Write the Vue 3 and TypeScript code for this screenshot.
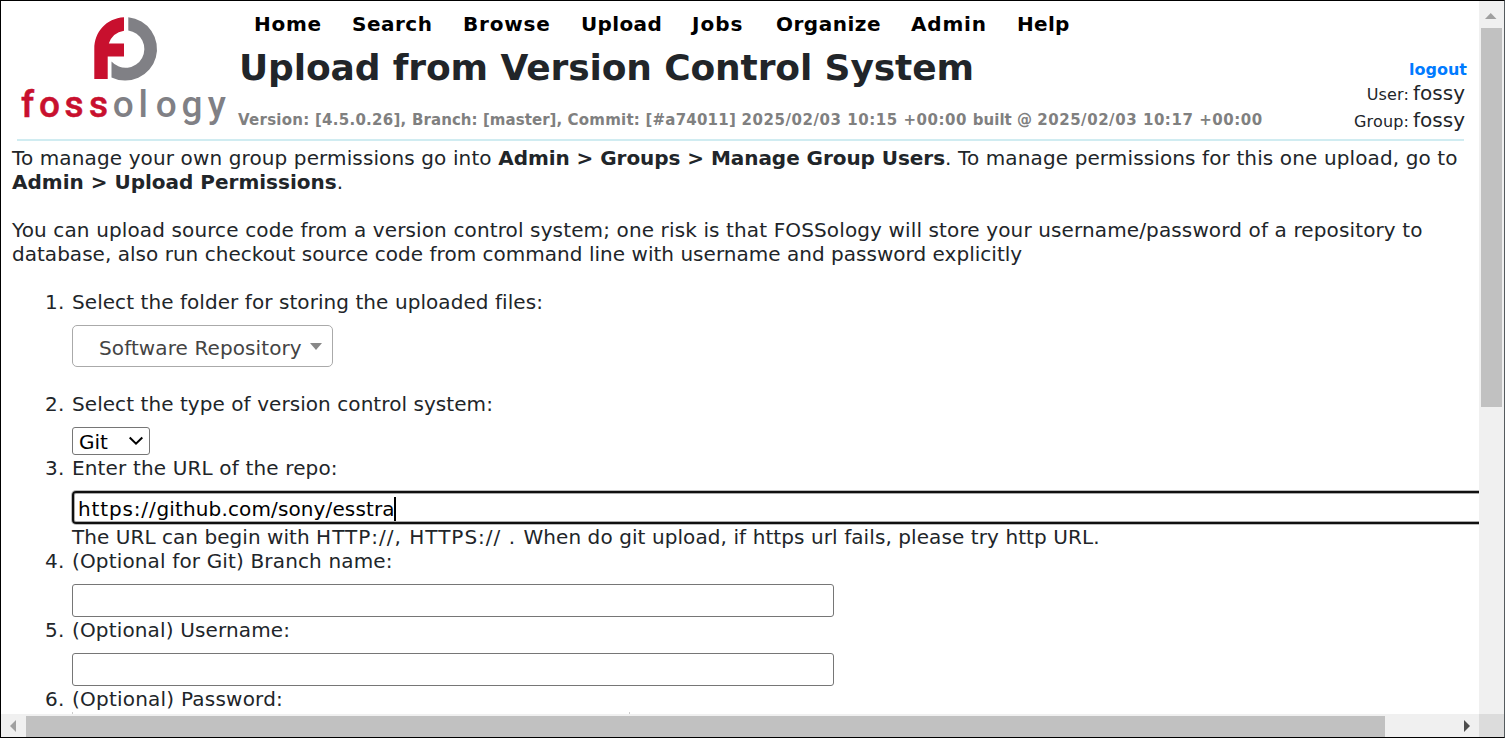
<script setup lang="ts">
interface NavItem { id: string; label: string }
const nav: NavItem[] = ['Home', 'Search', 'Browse', 'Upload', 'Jobs', 'Organize', 'Admin', 'Help']
  .map((label) => ({ id: label.toLowerCase(), label }))
</script>

<template>
  <div class="window">
    <div class="viewport">
      <header class="header">
        <svg class="logo" viewBox="0 0 226 132" width="226" height="132">
          <path d="M124 17.300V30.700Q112.500 32.500 108.800 43.500H124V56.500H107.700V79H94.300V49C94.300 32 106 18.500 124 17.300Z" fill="#c8102e" />
          <path d="M128.300 17.300A31.700 31.700 0 1 1 111.500 77.400V61.500A18.800 18.800 0 1 0 128.300 30.400Z" fill="#808085" />
          <g class="wordmark">
            <text class="red" x="21" y="117">f</text>
            <text class="red" x="39" y="117">o</text>
            <text class="red" x="64.500" y="117">s</text>
            <text class="red" x="89" y="117">s</text>
            <text x="112.700" y="117">o</text>
            <text x="138.500" y="117">l</text>
            <text x="155.700" y="117">o</text>
            <text x="181.500" y="117">g</text>
            <text x="207.700" y="117">y</text>
          </g>
        </svg>
        <div class="center">
          <nav class="nav">
            <a v-for="item in nav" :key="item.id" :class="item.id">{{ item.label }}</a>
          </nav>
          <h1>Upload from Version Control System</h1>
          <p class="version"><span class="number">Version: [4.5.0.26], </span><span class="branch">Branch: [master], </span><span class="commit">Commit: [#a74011] </span><span class="date">2025/02/03 10:15 +00:00 </span>built @ <span class="date">2025/02/03 10:17 +00:00</span></p>
        </div>
        <div class="account">
          <a class="logout">logout</a>
          <div class="who"><small>User:</small><span>fossy</span></div>
          <div class="who"><small>Group:</small><span>fossy</span></div>
        </div>
      </header>

      <main>
        <p><span class="l1a">To manage your own group permissions go into </span><b class="l1b">Admin &gt; Groups &gt; Manage Group Users</b><span class="l1a">. To manage permissions for this one upload, go to</span><br><b>Admin &gt; Upload Permissions</b>.</p>
        <p class="risk"><span class="l3">You can upload source code from a version control system; one risk is that FOSSology will store your username/password of a repository to</span><br><span class="l4">database, also run checkout source code from command line with username and password explicitly</span></p>
        <ol>
          <li class="folder">
            <label class="t1">Select the folder for storing the uploaded files:</label>
            <div class="combo"><span>Software Repository</span><i></i></div>
          </li>
          <li class="kind">
            <label class="t1">Select the type of version control system:</label>
            <div class="select"><span>Git</span>
              <svg width="16" height="16" viewBox="0 0 16 16"><path d="M1.700 4.500L8 10.700L14.300 4.500" fill="none" stroke="#000" stroke-width="2" /></svg>
            </div>
          </li>
          <li class="repo">
            <label>Enter the URL of the repo:</label>
            <div class="field url"><span class="scheme">https://</span><span class="path">github.com/sony/esstra</span><i class="caret"></i></div>
            <div class="hint">The URL can begin with <span class="schemes">HTTP://, HTTPS:// . </span><span class="rest">When do git upload, if https url fails, please try http URL.</span></div>
          </li>
          <li><label>(Optional for Git) Branch name:</label><div class="field"></div></li>
          <li><label>(Optional) Username:</label><div class="field"></div></li>
          <li><label class="t6">(Optional) Password:</label><div class="next"></div></li>
        </ol>
      </main>
    </div>
    <div class="vbar">
      <svg width="24" height="27" viewBox="0 0 24 27"><path d="M6 18H17.500L11.750 12Z" fill="#a0a0a0" /></svg>
      <div class="thumb"></div>
    </div>
    <div class="hbar">
      <svg width="25" height="23" viewBox="0 0 25 23"><path d="M15 6V18L9 12Z" fill="#a0a0a0" /></svg>
      <div class="thumb"></div>
      <svg class="end" width="25" height="23" viewBox="0 0 25 23"><path d="M10 6V18L16 12Z" fill="#4d4d4d" /></svg>
    </div>
    <div class="corner"></div>
  </div>
</template>

<style>
html, body { margin: 0; overflow: hidden; background: #fff; }
</style>

<style scoped>
* { box-sizing: border-box; }
.window { width: 1505px; height: 738px; border: 1px solid #000; border-right-color: #555b5e; display: grid; grid-template-columns: 1478px 25px; grid-template-rows: 713px 23px; font: 20px/24px "DejaVu Sans", Verdana, sans-serif; color: #212529; background: #fff; overflow: hidden; }
.viewport { overflow: hidden; white-space: nowrap; }
.header { display: flex; height: 140px; margin: 0 15px 0 16px; border-bottom: 2px solid #d0ecf1; }
.logo { flex: none; margin: -1px 0 0 -17px; }
.wordmark { font: 500 37px Roboto, sans-serif; fill: #808085; }
.wordmark .red { fill: #c8102e; stroke: #c8102e; stroke-width: .5px; }
.center { width: 1050px; margin-left: 12px; flex: none; }
.nav { display: flex; height: 24px; margin: 11px 0 0 16px; font-weight: bold; color: #000; }
.home { width: 98px; letter-spacing: .7px; }
.search { width: 111px; letter-spacing: .5px; }
.browse { width: 118px; letter-spacing: .8px; }
.upload { width: 111px; letter-spacing: .35px; }
.jobs { width: 84px; letter-spacing: 1px; }
.organize { width: 135px; letter-spacing: .5px; }
.admin { width: 106px; letter-spacing: .8px; }
.help { letter-spacing: .3px; }
h1 { margin: 10px 0 0 1px; font-size: 36px; line-height: 44px; font-weight: bold; letter-spacing: -.12px; }
.version { margin: 20px 0 0; font-size: 15px; line-height: 20px; font-weight: bold; color: #808080; white-space: pre; }
.number { letter-spacing: .26px; }
.branch { letter-spacing: .06px; }
.commit { letter-spacing: .22px; }
.date { letter-spacing: .55px; }
.account { margin-left: auto; width: 150px; padding-top: 57px; display: flex; flex-direction: column; align-items: flex-end; }
.logout { font-size: 16px; line-height: 23px; font-weight: bold; color: #007bff; margin-right: -3px; }
.who { height: 27px; line-height: 25px; margin-right: -1px; }
.who small { font-size: 16px; margin-right: 4px; letter-spacing: .15px; }
main { padding: 5px 0 0 11px; }
p { margin: 0; }
.l1a { letter-spacing: .12px; }
.l1b { letter-spacing: -.05px; }
.risk { margin-top: 24px; }
.l3 { letter-spacing: .127px; }
.l4 { letter-spacing: .025px; }
ol { margin: 24px 0 0; padding: 0 0 0 60px; list-style: none; counter-reset: step; }
li { height: 69px; counter-increment: step; }
label { display: block; height: 24px; letter-spacing: .15px; }
label::before { content: counter(step) "."; display: inline-block; width: 27px; margin-left: -27px; letter-spacing: .3px; }
.t1 { letter-spacing: .065px; }
.t6 { letter-spacing: .22px; }
.folder { height: 102px; }
.kind { height: 64px; }
.repo { height: 93px; }
.combo { display: flex; align-items: center; width: 261px; height: 42px; margin-top: 11px; padding: 4px 10px 0 26px; border: 1px solid #aaa; border-radius: 5px; color: #444; justify-content: space-between; letter-spacing: .1px; }
.combo i { border: 6px solid transparent; border-top: 7px solid #888; border-bottom: 0; margin-top: -4px; }
.select { display: flex; align-items: center; justify-content: space-between; width: 78px; height: 28px; margin-top: 11px; padding: 0 5px 0 6px; border: 1px solid #767676; border-radius: 3px; color: #000; }
.select span { padding-top: 2px; }
.field { width: 762px; height: 33px; margin-top: 11px; border: 1px solid #767676; border-radius: 3px; }
.url { width: 1500px; display: flex; align-items: center; padding: 2px 0 0 4px; border: 2px solid #101010; border-radius: 4px; box-shadow: 0 0 0 1px #bbb, inset 0 0 0 1px #aaa; color: #000; margin-bottom: 1px; }
.scheme { letter-spacing: .85px; }
.path { letter-spacing: .13px; }
.caret { width: 2px; height: 24px; margin-left: -1px; background: #000; }
.hint { letter-spacing: .05px; }
.schemes { letter-spacing: 1px; }
.rest { letter-spacing: .085px; }
.next { width: 558px; height: 20px; margin-top: 1px; border: solid #ccc; border-width: 0 1px; }
.vbar { background: #f0f0f0; }
.vbar svg, .hbar svg { display: block; flex: none; }
.vbar .thumb { width: 21px; height: 379px; margin-left: 2px; background: #c1c1c1; }
.hbar { display: flex; background: #f0f0f0; }
.hbar .thumb { width: 1359px; height: 21px; margin-top: 2px; background: #c1c1c1; }
.hbar .end { margin-left: auto; }
.corner { background: #dcdcdc; }
</style>
